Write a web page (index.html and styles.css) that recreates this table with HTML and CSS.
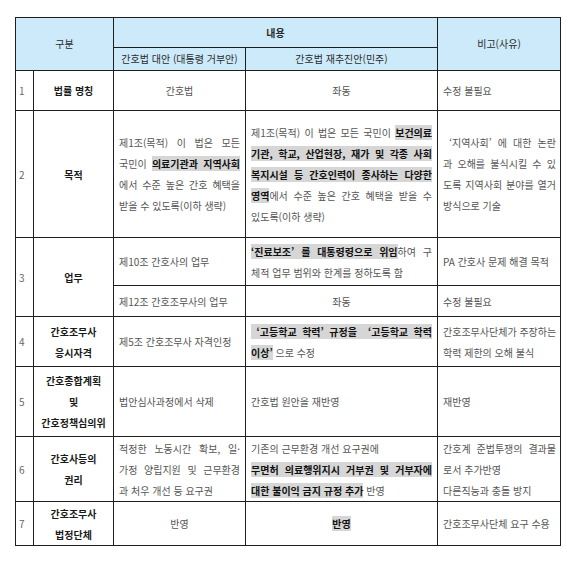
FILE: index.html
```html
<!DOCTYPE html>
<html lang="ko">
<head>
<meta charset="utf-8">
<title>간호법 비교</title>
<link rel="stylesheet" href="styles.css">
</head>
<body>
<table class="cmp">
  <colgroup>
    <col class="c-no"><col class="c-cat"><col class="c-a"><col class="c-b"><col class="c-note">
  </colgroup>
  <thead>
    <tr class="h1">
      <th colspan="2" rowspan="2">구분</th>
      <th colspan="2" class="bold">내용</th>
      <th rowspan="2">비고(사유)</th>
    </tr>
    <tr class="h2">
      <th>간호법 대안 (대통령 거부안)</th>
      <th>간호법 재추진안(민주)</th>
    </tr>
  </thead>
  <tbody>
    <tr class="r1">
      <td class="no">1</td>
      <td class="cat">법률 명칭</td>
      <td class="ctr">간호법</td>
      <td class="ctr">좌동</td>
      <td class="note">수정 불필요</td>
    </tr>
    <tr class="r2">
      <td class="no">2</td>
      <td class="cat">목적</td>
      <td>
        <span class="ln j">제1조(목적) 이 법은 모든</span>
        <span class="ln j">국민이 <b class="hl">의료기관과 지역사회</b></span>
        <span class="ln j">에서 수준 높은 간호 혜택을</span>
        <span class="ln">받을 수 있도록(이하 생략)</span>
      </td>
      <td>
        <span class="ln j">제1조(목적) 이 법은 모든 국민이 <b class="hl">보건의료</b></span>
        <span class="ln j"><b class="hl">기관, 학교, 산업현장, 재가 및 각종 사회</b></span>
        <span class="ln j"><b class="hl">복지시설 등 간호인력이 종사하는 다양한</b></span>
        <span class="ln j"><b class="hl">영역</b>에서 수준 높은 간호 혜택을 받을 수</span>
        <span class="ln">있도록(이하 생략)</span>
      </td>
      <td class="note">
        <span class="ln j">&nbsp;‘지역사회’ 에 대한 논란</span>
        <span class="ln j">과 오해를 불식시킬 수 있</span>
        <span class="ln j">도록 지역사회 분야를 열거</span>
        <span class="ln">방식으로 기술</span>
      </td>
    </tr>
    <tr class="r3a">
      <td class="no" rowspan="2">3</td>
      <td class="cat" rowspan="2">업무</td>
      <td>제10조 간호사의 업무</td>
      <td>
        <span class="ln j"><b class="hl">‘진료보조’ 를 대통령령으로 위임</b>하여 구</span>
        <span class="ln">체적 업무 범위와 한계를 정하도록 함</span>
      </td>
      <td class="note">PA 간호사 문제 해결 목적</td>
    </tr>
    <tr class="r3b">
      <td>제12조 간호조무사의 업무</td>
      <td class="ctr">좌동</td>
      <td class="note">수정 불필요</td>
    </tr>
    <tr class="r4">
      <td class="no">4</td>
      <td class="cat">간호조무사<br>응시자격</td>
      <td>제5조 간호조무사 자격인정</td>
      <td>
        <span class="ln j"><b class="hl">&nbsp;‘고등학교 학력’ 규정을 &nbsp;‘고등학교 학력</b></span>
        <span class="ln"><b class="hl">이상’</b> 으로 수정</span>
      </td>
      <td class="note">
        <span class="ln">간호조무사단체가 주장하는</span>
        <span class="ln">학력 제한의 오해 불식</span>
      </td>
    </tr>
    <tr class="r5">
      <td class="no">5</td>
      <td class="cat">간호종합계획<br>및<br>간호정책심의위</td>
      <td>법안심사과정에서 삭제</td>
      <td>간호법 원안을 재반영</td>
      <td class="note">재반영</td>
    </tr>
    <tr class="r6">
      <td class="no">6</td>
      <td class="cat">간호사등의<br>권리</td>
      <td>
        <span class="ln j">적정한 노동시간 확보, 일·</span>
        <span class="ln j">가정 양립지원 및 근무환경</span>
        <span class="ln">과 처우 개선 등 요구권</span>
      </td>
      <td>
        <span class="ln">기존의 근무환경 개선 요구권에</span>
        <span class="ln j"><b class="hl">무면허 의료행위지시 거부권 및 거부자에</b></span>
        <span class="ln"><b class="hl">대한 불이익 금지 규정 추가</b> 반영</span>
      </td>
      <td class="note">
        <span class="ln j">간호계 준법투쟁의 결과물</span>
        <span class="ln">로서 추가반영</span>
        <span class="ln">다른직능과 충돌 방지</span>
      </td>
    </tr>
    <tr class="r7">
      <td class="no">7</td>
      <td class="cat">간호조무사<br>법정단체</td>
      <td class="ctr">반영</td>
      <td class="ctr"><b class="hl">반영</b></td>
      <td class="note">간호조무사단체 요구 수용</td>
    </tr>
  </tbody>
</table>
</body>
</html>
```

FILE: styles.css
```css
html, body {
  margin: 0;
  padding: 0;
  background: #ffffff;
}

body {
  padding: 17px 0 0 15px;
  font-family: "Noto Sans CJK KR", "Noto Sans", sans-serif;
  font-size: 10px;
  line-height: 21px;
  color: #555555;
}

.cmp {
  border-collapse: collapse;
  table-layout: fixed;
  width: 545px;
}

.c-no { width: 18px; }
.c-cat { width: 80px; }
.c-a { width: 132px; }
.c-b { width: 192px; }
.c-note { width: 123px; }

.cmp th,
.cmp td {
  border: 1px solid #1e1e1e;
  padding: 0 5px;
  vertical-align: middle;
  text-align: left;
}

.cmp th {
  background: #cdeafa;
  color: #2a2a2a;
  font-weight: normal;
  text-align: center;
  white-space: nowrap;
  padding: 0 2px;
  line-height: 18px;
}

.cmp th.bold {
  font-weight: bold;
}

.h1 { height: 30px; }
.h2 { height: 23px; }
.r1 { height: 40px; }
.r2 { height: 127px; }
.r3a { height: 48px; }
.r3b { height: 31px; }
.r4 { height: 50px; }
.r5 { height: 70px; }
.r6 { height: 65px; }
.r7 { height: 44px; }

.cmp td.no {
  padding: 0 3px;
  color: #666666;
}

.cmp td.cat {
  text-align: center;
  font-weight: bold;
  color: #1a1a1a;
  padding: 0 2px;
}

.cmp td.ctr {
  text-align: center;
}

.cmp td.note {
  padding: 0 4px 0 5px;
}

.ln {
  display: block;
  white-space: nowrap;
}

.ln.j {
  text-align: justify;
  text-align-last: justify;
}

.hl {
  background: #d6d6d6;
  color: #111111;
  font-weight: bold;
}
```
